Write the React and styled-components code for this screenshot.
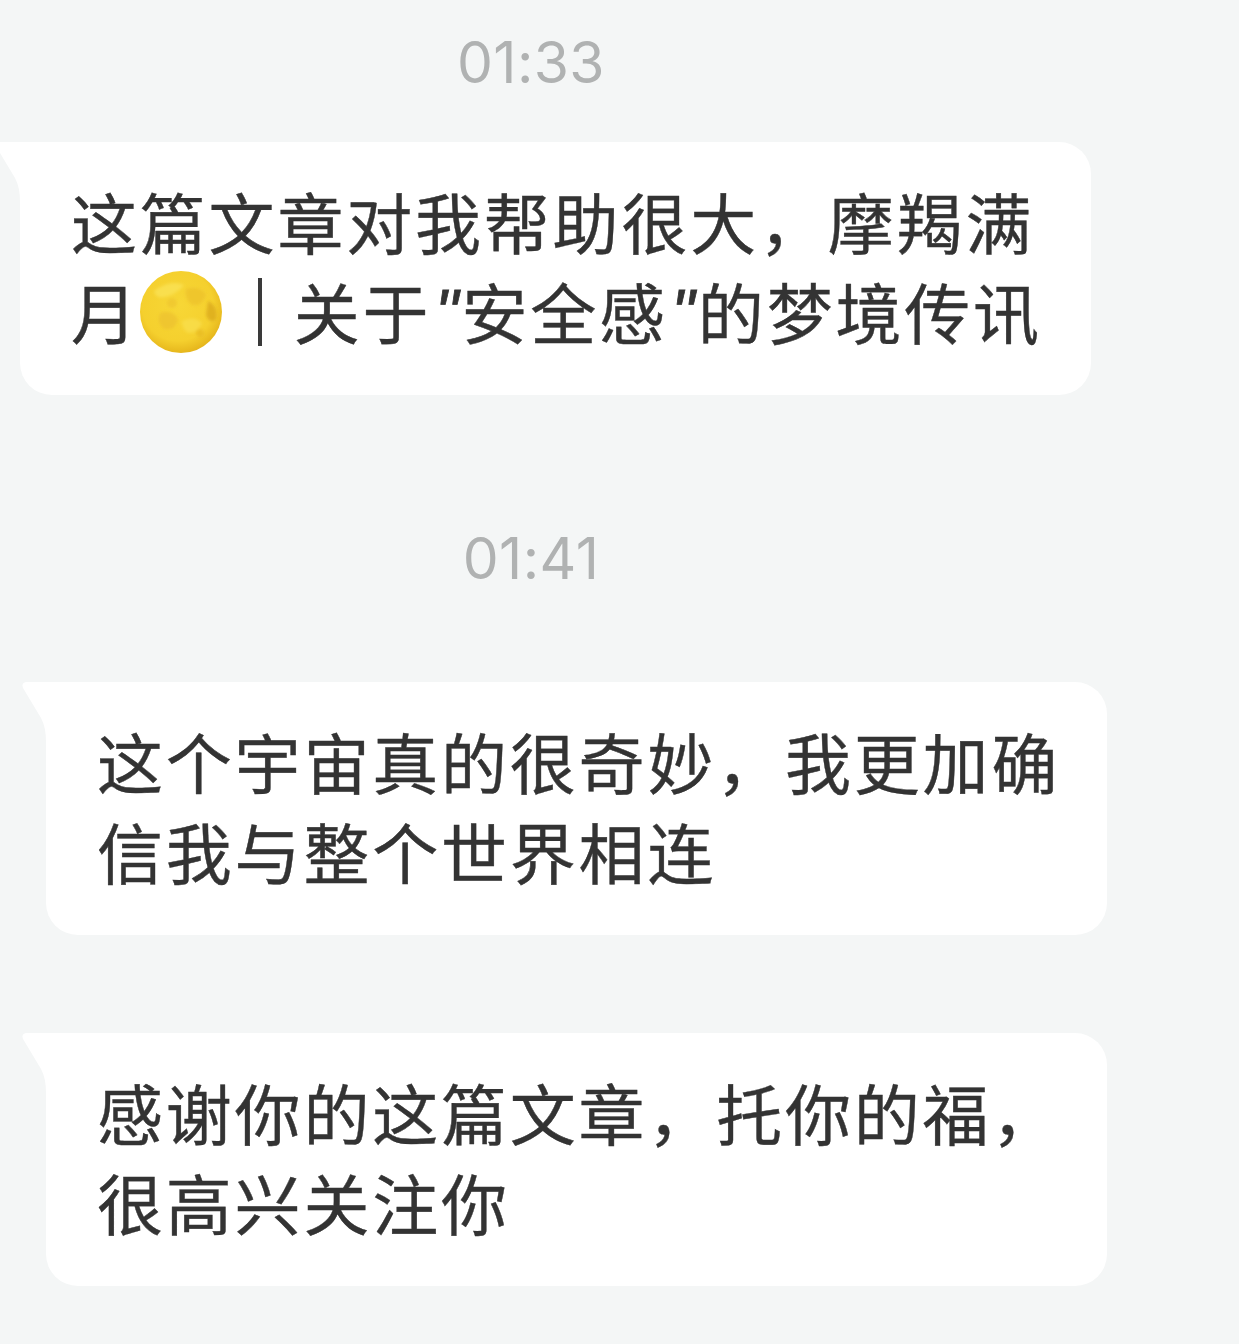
import React from 'react';
import styled, { createGlobalStyle } from 'styled-components';

const GlobalStyle = createGlobalStyle`
html, body {
  margin: 0;
  padding: 0;
  background: #f4f6f6;
}
`;

const Page = styled.div`
width: 1239px;
height: 1344px;
overflow: hidden;
display: flex;
flex-direction: column;
background: #f4f6f6;
font-family: "Noto Sans CJK SC", "Liberation Sans", sans-serif;
`;

const Time = styled.div`
width: 1062px;
text-align: center;
font-family: Inter, "Liberation Sans", sans-serif;
font-weight: 400;
font-size: 57px;
line-height: 62px;
letter-spacing: 0.4px;
color: #b0b2b2;
margin-top: ${(p) => p.$top}px;
`;

const Bubble = styled.div`
position: relative;
box-sizing: border-box;
height: 253px;
background: #fff;
border-radius: 0 32px 32px 32px;
margin-top: ${(p) => p.$top}px;
margin-left: ${(p) => p.$left}px;
width: ${(p) => p.$width}px;
padding: 33px 0 0 ${(p) => p.$pad}px;
&::before {
  content: '';
  position: absolute;
  top: 0;
  left: -24px;
  width: 25px;
  height: 60px;
  background: #fff;
  clip-path: path('M4 0 Q-1 1 1 6 L19 36 Q24 45 24 60 L25 60 L25 0 Z');
}
`;

const Line = styled.div`
display: flex;
align-items: center;
height: 90px;
font-size: 66px;
letter-spacing: 2.8px;
line-height: 90px;
color: #333;
-webkit-text-stroke: 0.4px #333;
white-space: nowrap;
`;

const Bar = styled.span`
display: block;
flex: none;
width: 4px;
height: 68px;
background: #3a3a3a;
margin: 4px 32px 0 36px;
`;

const Quote = styled.span`
display: block;
flex: none;
width: 30px;
padding-top: 6px;
text-align: center;
font-family: "Liberation Sans", Arial, sans-serif;
font-style: italic;
letter-spacing: 0;
-webkit-text-stroke: 0.8px #333;
`;

const MoonWrap = styled.svg`
display: block;
width: 82px;
height: 82px;
margin-top: 3px;
flex: none;
`;

const Moon = () => (
  <MoonWrap viewBox="0 0 82 82">
    <defs>
      <radialGradient id="moonFill" cx="46%" cy="42%" r="60%">
        <stop offset="0%" stopColor="#f7d736" />
        <stop offset="72%" stopColor="#f5d02e" />
        <stop offset="100%" stopColor="#e4b31a" />
      </radialGradient>
      <filter id="moonBlur" x="-20%" y="-20%" width="140%" height="140%">
        <feGaussianBlur stdDeviation="1.6" />
      </filter>
      <clipPath id="moonClip">
        <circle cx="41" cy="41" r="41" />
      </clipPath>
    </defs>
    <circle cx="41" cy="41" r="41" fill="url(#moonFill)" />
    <g clipPath="url(#moonClip)" filter="url(#moonBlur)">
      <path d="M14 20 Q30 8 44 14 Q36 24 24 26 Q16 28 14 20Z" fill="#fbe45a" opacity="0.7" />
      <path d="M46 18 Q60 14 66 24 Q62 36 52 34 Q44 28 46 18Z" fill="#ecc02b" opacity="0.7" />
      <path d="M68 30 Q78 34 76 48 Q70 54 66 44Z" fill="#d9a81c" opacity="0.75" />
      <path d="M20 42 Q32 38 38 48 Q36 60 24 58 Q16 52 20 42Z" fill="#ecc02c" opacity="0.7" />
      <path d="M42 50 Q54 44 62 52 Q58 62 48 62 Q42 58 42 50Z" fill="#f9e050" opacity="0.7" />
      <circle cx="32" cy="32" r="5" fill="#ecc22c" opacity="0.6" />
      <circle cx="60" cy="62" r="4" fill="#e4b622" opacity="0.6" />
    </g>
  </MoonWrap>
);

const App = () => (
  <Page>
    <GlobalStyle />
    <Time $top={32}>01:33</Time>
    <Bubble $top={48} $left={20} $width={1071} $pad={51}>
      <Line>这篇文章对我帮助很大，摩羯满</Line>
      <Line>
        月
        <Moon />
        <Bar />
        关于
        <Quote>"</Quote>
        安全感
        <Quote>"</Quote>
        的梦境传讯
      </Line>
    </Bubble>
    <Time $top={133}>01:41</Time>
    <Bubble $top={92} $left={46} $width={1061} $pad={51}>
      <Line>这个宇宙真的很奇妙，我更加确</Line>
      <Line>信我与整个世界相连</Line>
    </Bubble>
    <Bubble $top={98} $left={46} $width={1061} $pad={51}>
      <Line>感谢你的这篇文章，托你的福，</Line>
      <Line>很高兴关注你</Line>
    </Bubble>
  </Page>
);

export default App;
